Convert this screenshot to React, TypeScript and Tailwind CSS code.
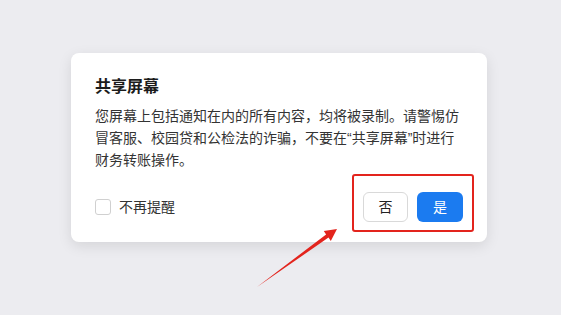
export default function App() {
	return (
		<main
			className="relative h-[315px] w-[561px] overflow-hidden bg-[#ececf0] pt-[53px]"
			style={{ fontFamily: '"Liberation Sans", "Noto Sans CJK SC", sans-serif' }}
		>
			<div className="ml-[71px] w-[416px] rounded-lg bg-white px-6 pb-5 pt-[22px] shadow-[0_4px_14px_rgba(0,0,0,0.10)]">
				<h2 className="text-base font-bold leading-6 text-[#1c1c1c]">共享屏幕</h2>
				<p className="mt-1.5 text-sm leading-[22px] text-[#333]">
					您屏幕上包括通知在内的所有内容，均将被录制。请警惕仿冒客服、校园贷和公检法的诈骗，不要在“共享屏幕”时进行财务转账操作。
				</p>
				<div className="mt-[21px] flex items-center justify-between">
					<label className="flex items-center gap-2 text-sm text-[#333]">
						<span className="h-4 w-4 rounded-[3px] border border-[#d0d0d0] bg-white"></span>
						不再提醒
					</label>
					<div className="relative flex gap-[9px]">
						<button className="h-[30px] w-[45px] rounded-md border border-[#d9d9d9] bg-white text-sm text-[#222]">
							否
						</button>
						<button className="h-[30px] w-[46px] rounded-md bg-[#1b7bf0] text-sm text-white">
							是
						</button>
						<div className="pointer-events-none absolute -bottom-[10px] -left-[11px] -right-[11px] -top-[18px] rounded-[3px] border-2 border-[#e3241d]"></div>
					</div>
				</div>
			</div>

			{/* annotation arrow */}
			<svg
				className="pointer-events-none absolute left-[250px] top-[220px]"
				width="95"
				height="75"
				viewBox="250 220 95 75"
			>
				<polygon
					points="257,287 326.1,234.4 323.8,231.1 337,229 330.8,240.9 328.5,237.6"
					fill="#e3241d"
				/>
			</svg>
		</main>
	);
}
